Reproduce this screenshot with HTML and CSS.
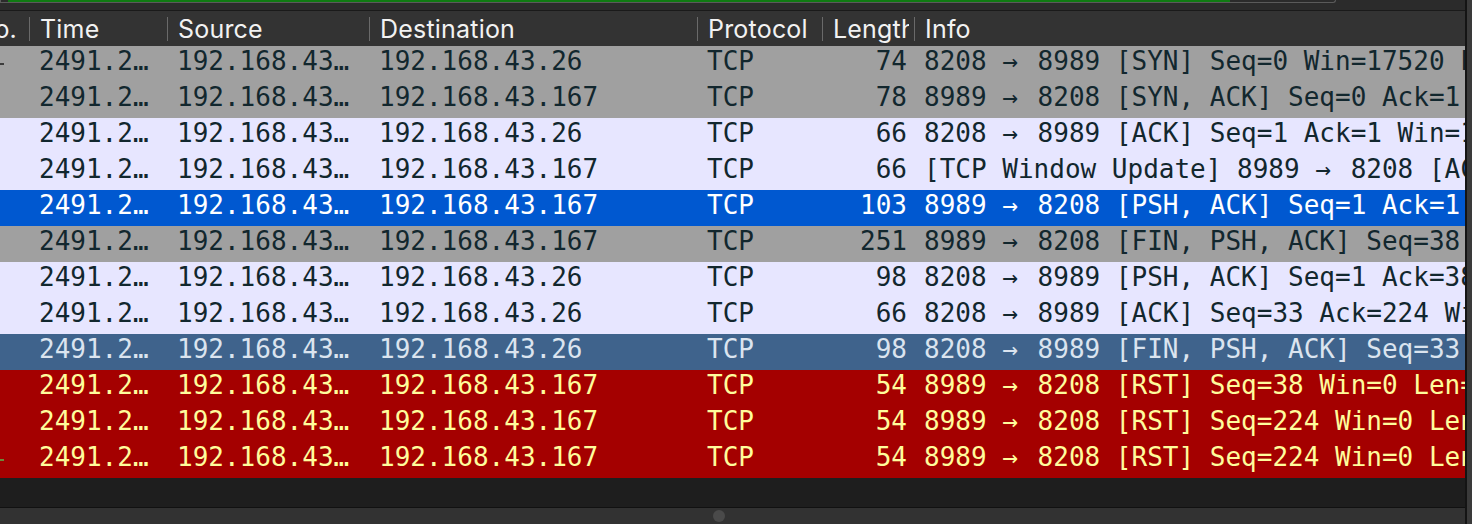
FILE: index.html
```html
<!DOCTYPE html>
<html>
<head>
<meta charset="utf-8">
<link rel="stylesheet" href="styles.css">
</head>
<body>
<div class="app">
  <div class="main">
    <div class="topstrip"><div class="field"><div class="progress"></div></div></div>
    <div class="grid header">
      <div class="hcell hno"><span>No.</span></div>
      <div class="hcell"><span>Time</span></div>
      <div class="hcell"><span>Source</span></div>
      <div class="hcell"><span>Destination</span></div>
      <div class="hcell"><span>Protocol</span></div>
      <div class="hcell"><span>Length</span></div>
      <div class="hcell"><span>Info</span></div>
    </div>
    <div class="rows">
      <div class="grid row grey"><div class="c mark"><i class="tick"></i></div><div class="c">2491.2…</div><div class="c">192.168.43…</div><div class="c">192.168.43.26</div><div class="c">TCP</div><div class="c num">74</div><div class="c">8208 <span class="arr">→</span> 8989 [SYN] Seq=0 Win=17520 Len=0 MSS=1460 SACK_PERM</div></div>
      <div class="grid row grey"><div class="c"></div><div class="c">2491.2…</div><div class="c">192.168.43…</div><div class="c">192.168.43.167</div><div class="c">TCP</div><div class="c num">78</div><div class="c">8989 <span class="arr">→</span> 8208 [SYN, ACK] Seq=0 Ack=1 Win=65535 Len=0</div></div>
      <div class="grid row lav"><div class="c"></div><div class="c">2491.2…</div><div class="c">192.168.43…</div><div class="c">192.168.43.26</div><div class="c">TCP</div><div class="c num">66</div><div class="c">8208 <span class="arr">→</span> 8989 [ACK] Seq=1 Ack=1 Win=17520 Len=0</div></div>
      <div class="grid row lav"><div class="c"></div><div class="c">2491.2…</div><div class="c">192.168.43…</div><div class="c">192.168.43.167</div><div class="c">TCP</div><div class="c num">66</div><div class="c">[TCP Window Update] 8989 <span class="arr">→</span> 8208 [ACK] Seq=1</div></div>
      <div class="grid row sel"><div class="c"></div><div class="c">2491.2…</div><div class="c">192.168.43…</div><div class="c">192.168.43.167</div><div class="c">TCP</div><div class="c num">103</div><div class="c">8989 <span class="arr">→</span> 8208 [PSH, ACK] Seq=1 Ack=1 Win=65535 Len=37</div></div>
      <div class="grid row grey"><div class="c"></div><div class="c">2491.2…</div><div class="c">192.168.43…</div><div class="c">192.168.43.167</div><div class="c">TCP</div><div class="c num">251</div><div class="c">8989 <span class="arr">→</span> 8208 [FIN, PSH, ACK] Seq=38 Ack=1 Win=65535</div></div>
      <div class="grid row lav"><div class="c"></div><div class="c">2491.2…</div><div class="c">192.168.43…</div><div class="c">192.168.43.26</div><div class="c">TCP</div><div class="c num">98</div><div class="c">8208 <span class="arr">→</span> 8989 [PSH, ACK] Seq=1 Ack=38 Win=17520</div></div>
      <div class="grid row lav"><div class="c"></div><div class="c">2491.2…</div><div class="c">192.168.43…</div><div class="c">192.168.43.26</div><div class="c">TCP</div><div class="c num">66</div><div class="c">8208 <span class="arr">→</span> 8989 [ACK] Seq=33 Ack=224 Win=17520</div></div>
      <div class="grid row steel"><div class="c"></div><div class="c">2491.2…</div><div class="c">192.168.43…</div><div class="c">192.168.43.26</div><div class="c">TCP</div><div class="c num">98</div><div class="c">8208 <span class="arr">→</span> 8989 [FIN, PSH, ACK] Seq=33 Ack=224 Win=17520</div></div>
      <div class="grid row red"><div class="c"></div><div class="c">2491.2…</div><div class="c">192.168.43…</div><div class="c">192.168.43.167</div><div class="c">TCP</div><div class="c num">54</div><div class="c">8989 <span class="arr">→</span> 8208 [RST] Seq=38 Win=0 Len=0</div></div>
      <div class="grid row red"><div class="c"></div><div class="c">2491.2…</div><div class="c">192.168.43…</div><div class="c">192.168.43.167</div><div class="c">TCP</div><div class="c num">54</div><div class="c">8989 <span class="arr">→</span> 8208 [RST] Seq=224 Win=0 Len=0</div></div>
      <div class="grid row red"><div class="c mark"><i class="tick green"></i></div><div class="c">2491.2…</div><div class="c">192.168.43…</div><div class="c">192.168.43.167</div><div class="c">TCP</div><div class="c num">54</div><div class="c">8989 <span class="arr">→</span> 8208 [RST] Seq=224 Win=0 Len=0</div></div>
    </div>
    <div class="empty"></div>
    <div class="statusbar"><span class="handle"></span></div>
  </div>
  <div class="vscroll"></div>
</div>
</body>
</html>
```

FILE: styles.css
```css
html, body {
  margin: 0;
  padding: 0;
  background: #1e1e1e;
  overflow: hidden;
}
.app {
  display: flex;
  width: 1472px;
  height: 524px;
}
.main {
  flex: 1;
  min-width: 0;
  display: flex;
  flex-direction: column;
  overflow: hidden;
}
.vscroll {
  width: 5px;
  border-left: 2px solid #141414;
  background: #3a3a3a;
}
.topstrip {
  height: 10px;
  background: #2b2b2b;
  border-bottom: 1px solid #1a1a1a;
  flex: none;
}
.field {
  width: 1336px;
  height: 3px;
  border: 1px solid #5a5a5a;
  border-top: none;
  border-radius: 0 0 4px 0;
  box-sizing: border-box;
  padding-left: 7px;
}
.progress {
  width: 1222px;
  height: 2px;
  background: #0f7a12;
}
.grid {
  display: grid;
  grid-template-columns: 29px 138px 202px 328px 125px 92px 1fr;
}
.header {
  height: 35px;
  background: #333333;
  flex: none;
  font-family: Inter, "Liberation Sans", sans-serif;
  font-size: 25px;
  letter-spacing: 0.2px;
  color: #f2f2f2;
}
.hcell {
  display: flex;
  align-items: center;
  overflow: hidden;
  white-space: nowrap;
  padding-right: 5px;
}
.hcell span {
  min-width: 0;
  overflow: hidden;
}
.hcell::before {
  content: "";
  flex: none;
  width: 1px;
  height: 24px;
  background: #6a6a6a;
  margin-right: 10px;
}
.hcell.hno::before {
  display: none;
}
.hno {
  justify-content: flex-end;
  padding-right: 12px;
}
.hno span {
  overflow: visible;
  flex: none;
}
.rows {
  flex: none;
}
.row {
  height: 36px;
  font-family: "DejaVu Sans Mono", monospace;
  font-size: 26px;
  line-height: 30px;
  color: #12272e;
}
.c {
  padding: 0 0 6px 10px;
  white-space: nowrap;
  overflow: hidden;
}
.c.num {
  text-align: right;
  padding-right: 7px;
}
.arr {
  padding-right: 4px;
}
.mark {
  padding: 0;
  display: flex;
  align-items: center;
}
.tick {
  display: block;
  width: 4px;
  height: 2px;
  background: #3c3c3c;
}
.tick.green {
  background: #6a8a3a;
}
.grey { background: #a0a0a0; }
.lav { background: #e7e6ff; }
.sel { background: #0058d0; color: #ffffff; }
.steel { background: #3f638c; color: #dbe4ef; }
.red { background: #a40000; color: #fffc9c; }
.empty {
  flex: 1;
  background: #1e1e1e;
  border-bottom: 1px solid #111111;
}
.statusbar {
  height: 16px;
  background: #323232;
  flex: none;
  display: flex;
  justify-content: center;
}
.handle {
  width: 12px;
  height: 12px;
  border-radius: 50%;
  background: #4a4a4a;
  margin: 2px 0 0 -27px;
}
```
